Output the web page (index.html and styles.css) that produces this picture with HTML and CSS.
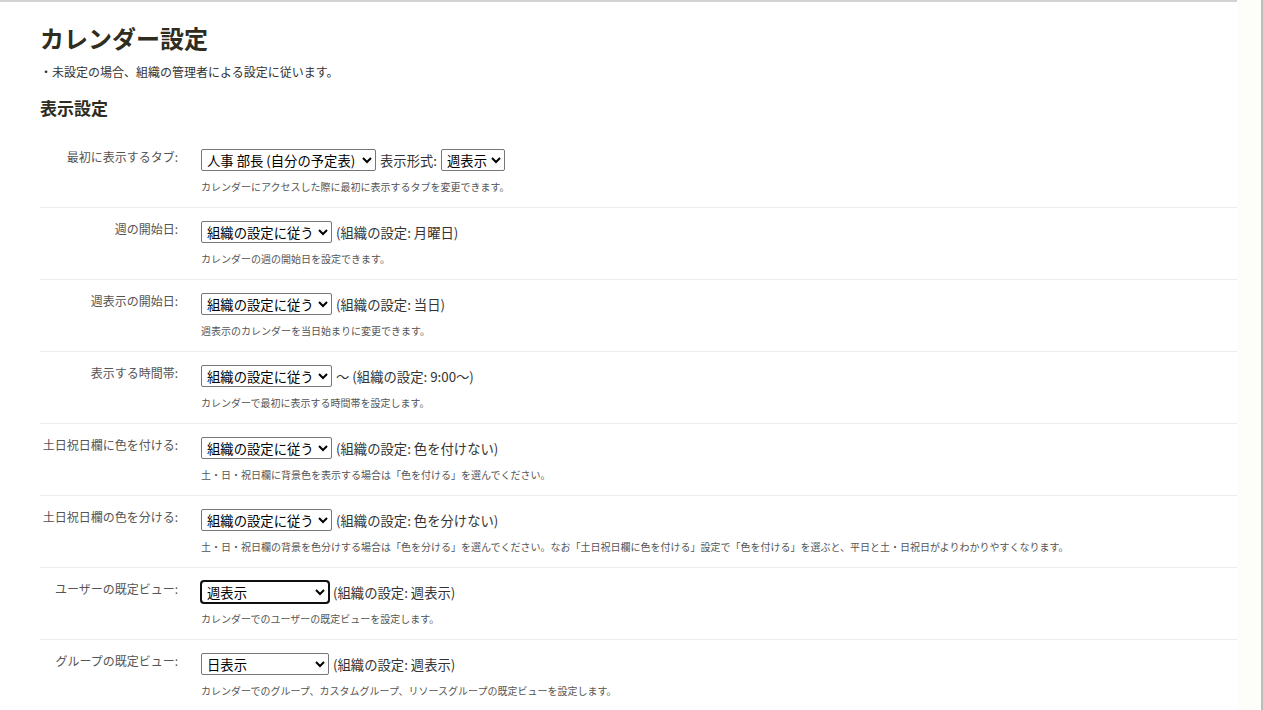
FILE: index.html
```html
<!DOCTYPE html>
<html lang="ja">
<head>
<meta charset="utf-8">
<title>カレンダー設定</title>
<link rel="stylesheet" href="styles.css">
</head>
<body>
<div class="page">
  <main class="main">
    <h1 class="title">カレンダー設定</h1>
    <p class="note">・未設定の場合、組織の管理者による設定に従います。</p>
    <h2 class="section">表示設定</h2>
    <div class="rows">
      <div class="row">
        <div class="label">最初に表示するタブ:</div>
        <div class="field">
          <div class="control">
            <select class="first"><option>人事 部長 (自分の予定表)</option></select>
            <span class="text">表示形式:</span>
            <select><option>週表示</option></select>
          </div>
          <div class="desc">カレンダーにアクセスした際に最初に表示するタブを変更できます。</div>
        </div>
      </div>
      <div class="row">
        <div class="label">週の開始日:</div>
        <div class="field">
          <div class="control">
            <select><option>組織の設定に従う</option></select>
            <span class="text">(組織の設定: 月曜日)</span>
          </div>
          <div class="desc">カレンダーの週の開始日を設定できます。</div>
        </div>
      </div>
      <div class="row">
        <div class="label">週表示の開始日:</div>
        <div class="field">
          <div class="control">
            <select><option>組織の設定に従う</option></select>
            <span class="text">(組織の設定: 当日)</span>
          </div>
          <div class="desc">週表示のカレンダーを当日始まりに変更できます。</div>
        </div>
      </div>
      <div class="row">
        <div class="label">表示する時間帯:</div>
        <div class="field">
          <div class="control">
            <select><option>組織の設定に従う</option></select>
            <span class="text">～ (組織の設定: 9:00～)</span>
          </div>
          <div class="desc">カレンダーで最初に表示する時間帯を設定します。</div>
        </div>
      </div>
      <div class="row">
        <div class="label">土日祝日欄に色を付ける:</div>
        <div class="field">
          <div class="control">
            <select><option>組織の設定に従う</option></select>
            <span class="text">(組織の設定: 色を付けない)</span>
          </div>
          <div class="desc">土・日・祝日欄に背景色を表示する場合は「色を付ける」を選んでください。</div>
        </div>
      </div>
      <div class="row">
        <div class="label">土日祝日欄の色を分ける:</div>
        <div class="field">
          <div class="control">
            <select><option>組織の設定に従う</option></select>
            <span class="text">(組織の設定: 色を分けない)</span>
          </div>
          <div class="desc">土・日・祝日欄の背景を色分けする場合は「色を分ける」を選んでください。なお「土日祝日欄に色を付ける」設定で「色を付ける」を選ぶと、平日と土・日祝日がよりわかりやすくなります。</div>
        </div>
      </div>
      <div class="row">
        <div class="label">ユーザーの既定ビュー:</div>
        <div class="field">
          <div class="control">
            <select class="wide focused"><option>週表示</option></select>
            <span class="text">(組織の設定: 週表示)</span>
          </div>
          <div class="desc">カレンダーでのユーザーの既定ビューを設定します。</div>
        </div>
      </div>
      <div class="row">
        <div class="label">グループの既定ビュー:</div>
        <div class="field">
          <div class="control">
            <select class="wide"><option>日表示</option></select>
            <span class="text">(組織の設定: 週表示)</span>
          </div>
          <div class="desc">カレンダーでのグループ、カスタムグループ、リソースグループの既定ビューを設定します。</div>
        </div>
      </div>
    </div>
  </main>
  <div class="side"></div>
</div>
</body>
</html>
```

FILE: styles.css
```css
html, body {
  margin: 0;
  padding: 0;
  height: 100%;
  overflow: hidden;
}
body {
  font-family: "Noto Sans CJK JP", "Noto Sans", sans-serif;
  color: #333;
  background: #fff;
}
.page {
  display: flex;
  height: 100%;
}
.main {
  width: 1197px;
  padding-left: 40px;
  border-top: 2px solid #d2d2d2;
  background: #fff;
}
.side {
  flex: 1;
  background: #fdfdfa;
  border-right: 2px solid #bcbcbc;
}
.title {
  margin: 19px 0 0;
  font-size: 24px;
  line-height: 34px;
  font-weight: bold;
  color: #2f2c20;
}
.note {
  margin: 9px 0 0;
  font-size: 12px;
  line-height: 16px;
  color: #333;
}
.section {
  margin: 16px 0 0;
  font-size: 17px;
  line-height: 24px;
  font-weight: bold;
  color: #2f2c20;
}
.rows {
  margin-top: 16px;
}
.row {
  display: grid;
  grid-template-columns: 138px 1fr;
  column-gap: 23px;
  padding: 13px 0 12px;
  border-bottom: 1px solid #ececec;
  height: 46px;
}
.label {
  text-align: right;
  font-size: 12px;
  line-height: 16px;
  color: #555;
  padding-top: 0;
}
.control {
  display: flex;
  align-items: center;
  gap: 4px;
  height: 22px;
}
select {
  font-family: "Noto Sans CJK JP", "Noto Sans", sans-serif;
  font-size: 13.33px;
  height: 22px;
  padding: 0 1px;
  color: #000;
  background: #fff;
  border: 1px solid #767676;
  border-radius: 2px;
}
select.first {
  padding-right: 3px;
}
select.wide {
  width: 128px;
}
select.focused {
  outline: 2px solid #101010;
  outline-offset: -1px;
  border-radius: 3px;
}
.text {
  font-size: 13.33px;
  color: #333;
  white-space: nowrap;
}
.desc {
  margin-top: 9px;
  font-size: 10px;
  line-height: 14px;
  color: #555;
}
```
